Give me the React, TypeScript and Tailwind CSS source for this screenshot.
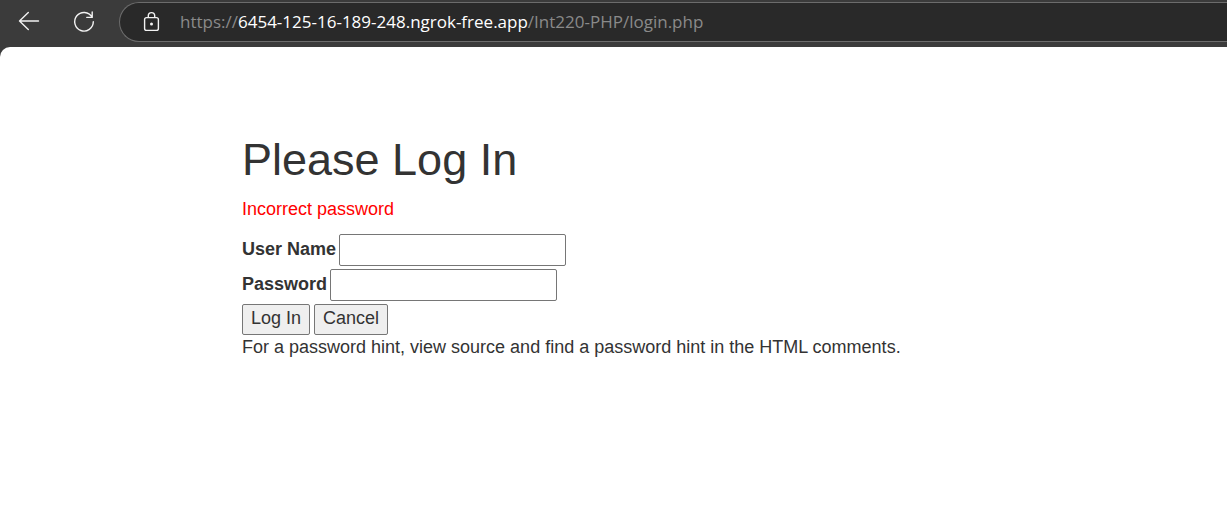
import type { ReactNode } from 'react';

function ToolbarButton({ label, children }: { label: string; children: ReactNode }) {
  return (
    <button type="button" aria-label={label} className="flex size-6 shrink-0 items-center justify-center text-[#f2f2f2]">
      {children}
    </button>
  );
}

function BrowserBar() {
  return (
    <header className="flex h-[47px] items-start bg-[#3b3b3b] pt-[2px] pl-[17px]">
      <div className="flex h-10 items-center gap-[31px] pr-[23px]">
        <ToolbarButton label="Back">
          <svg width="24" height="24" viewBox="0 0 24 24" fill="none" stroke="currentColor" strokeWidth="1.4" strokeLinecap="round" strokeLinejoin="round">
            <path d="M21.5 11H2.5M11.3 2.6L2.5 11l8.8 8.4" />
          </svg>
        </ToolbarButton>
        <ToolbarButton label="Refresh">
          <svg width="24" height="24" viewBox="0 0 24 24" fill="none" stroke="currentColor" strokeWidth="1.4" strokeLinecap="round" strokeLinejoin="round">
            <path d="M20 7A9.3 9.3 0 1 0 21.3 11.8M20.2 2v5.4h-5.4" />
          </svg>
        </ToolbarButton>
      </div>
      <div className="flex h-10 min-w-0 flex-1 items-center gap-4 rounded-l-full border border-r-0 border-[#6c6c6c] bg-[#292929] pl-5">
        <svg className="shrink-0 text-[#f2f2f2]" width="24" height="24" viewBox="0 0 24 24" fill="none" stroke="currentColor" strokeWidth="1.4" strokeLinejoin="round">
          <rect x="4.6" y="7.6" width="13.8" height="12.8" rx="2" />
          <path d="M8.3 7.6V5.8a3.2 3.2 0 0 1 6.4 0v1.8" />
          <circle cx="11.5" cy="14" r="1.5" fill="currentColor" stroke="none" />
        </svg>
        <p className="truncate font-['Open_Sans','Noto_Sans',sans-serif] text-[17px] leading-6 text-[#8a8a8a]">
          https://<span className="text-white">6454-125-16-189-248.ngrok-free.app</span>/Int220-PHP/login.php
        </p>
      </div>
    </header>
  );
}

function Field({ id, label, type }: { id: string; label: string; type: string }) {
  return (
    <div className="flex items-center gap-[3px]">
      <label htmlFor={id} className="pb-[2px] font-bold">
        {label}
      </label>
      <input id={id} name={id} type={type} className="h-8 w-[227px] rounded-[2px] border border-[#767676] bg-white px-1" />
    </div>
  );
}

function FormButton({ type, children }: { type: 'submit' | 'button'; children: ReactNode }) {
  return (
    <button type={type} className="flex h-[31px] items-center rounded-[2px] border border-[#767676] bg-[#efefef] px-2 pb-[2px]">
      {children}
    </button>
  );
}

export default function App() {
  return (
    <div className="flex min-h-screen flex-col bg-[#3b3b3b]">
      <BrowserBar />
      <main className="flex-1 rounded-tl-[10px] bg-white px-[242px] pt-[88px] font-['Liberation_Sans',Arial,sans-serif] text-[18px] leading-[25px] text-[#333333]">
        <h1 className="text-[45px] leading-[50px]">Please Log In</h1>
        <p className="mt-3 text-[#ff0000]">Incorrect password</p>
        <form className="mt-3 flex flex-col gap-[3px]" onSubmit={(event) => event.preventDefault()}>
          <Field id="email" label="User Name" type="text" />
          <Field id="pass" label="Password" type="password" />
          <div className="flex gap-1">
            <FormButton type="submit">Log In</FormButton>
            <FormButton type="button">Cancel</FormButton>
          </div>
        </form>
        <p>For a password hint, view source and find a password hint in the HTML comments.</p>
      </main>
    </div>
  );
}
